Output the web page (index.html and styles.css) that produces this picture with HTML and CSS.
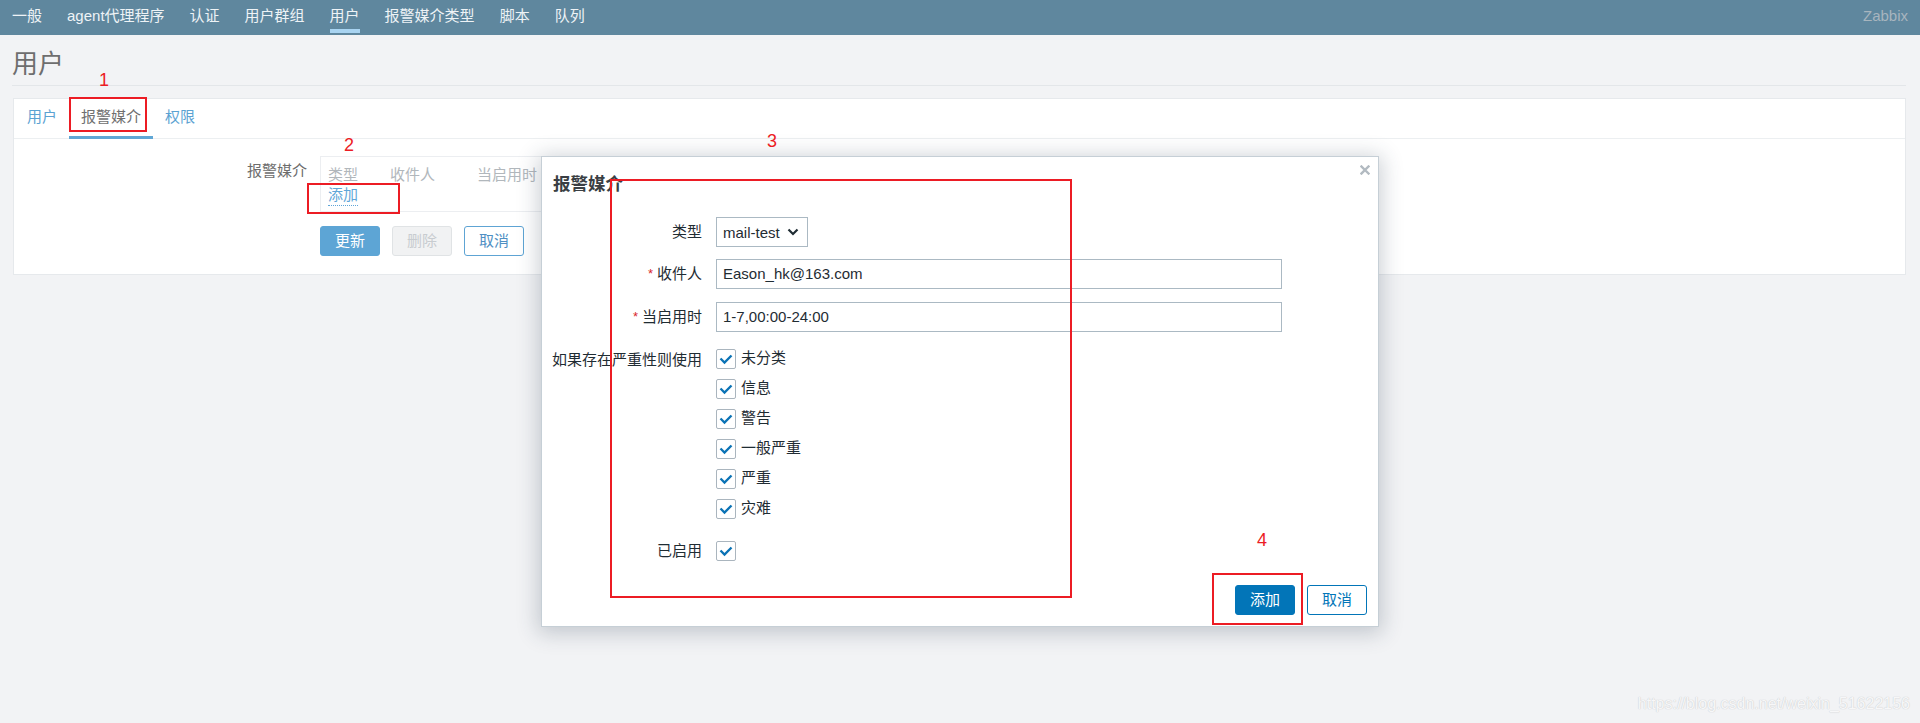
FILE: index.html
```html
<!DOCTYPE html>
<html lang="zh-CN">
<head>
<meta charset="utf-8">
<title>用户</title>
<link rel="stylesheet" href="styles.css">
</head>
<body>
<header class="topnav">
  <nav class="topnav-menu">
    <a class="topnav-item">一般</a>
    <a class="topnav-item">agent代理程序</a>
    <a class="topnav-item">认证</a>
    <a class="topnav-item">用户群组</a>
    <a class="topnav-item is-active">用户</a>
    <a class="topnav-item">报警媒介类型</a>
    <a class="topnav-item">脚本</a>
    <a class="topnav-item">队列</a>
  </nav>
  <span class="topnav-brand">Zabbix</span>
</header>

<main class="page">
  <h1 class="page-title">用户</h1>
  <section class="card">
    <ul class="tabs">
      <li class="tab">用户</li>
      <li class="tab is-active">报警媒介</li>
      <li class="tab">权限</li>
    </ul>
    <div class="card-body">
      <div class="form-row">
        <div class="form-label">报警媒介</div>
        <div class="media-table">
          <div class="media-head">
            <span class="col-type">类型</span>
            <span class="col-to">收件人</span>
            <span class="col-when">当启用时</span>
          </div>
          <div class="media-add"><a class="link-dotted">添加</a></div>
        </div>
      </div>
      <div class="form-actions">
        <button class="btn btn-primary-faded">更新</button>
        <button class="btn btn-disabled">删除</button>
        <button class="btn btn-alt-faded">取消</button>
      </div>
    </div>
  </section>
</main>

<div class="dialog">
  <div class="dialog-head">
    <h2 class="dialog-title">报警媒介</h2>
    <button class="dialog-close" aria-label="关闭">
      <svg width="10" height="10" viewBox="0 0 10 10"><path d="M1.5 1.5 L8.5 8.5 M8.5 1.5 L1.5 8.5" stroke="#b2bac1" stroke-width="2.4" stroke-linecap="square"/></svg>
    </button>
  </div>
  <div class="dialog-form">
    <div class="dlabel">类型</div>
    <div class="dfield">
      <div class="select">
        <span>mail-test</span>
        <svg width="12" height="8" viewBox="0 0 12 8"><path d="M1.5 1.5 L6 6 L10.5 1.5" fill="none" stroke="#1f2c33" stroke-width="2.2"/></svg>
      </div>
    </div>

    <div class="dlabel"><span class="req">*</span>收件人</div>
    <div class="dfield"><div class="input">Eason_hk@163.com</div></div>

    <div class="dlabel"><span class="req">*</span>当启用时</div>
    <div class="dfield"><div class="input">1-7,00:00-24:00</div></div>

    <div class="dlabel">如果存在严重性则使用</div>
    <div class="dfield">
      <ul class="checklist">
        <li class="check-item"><span class="checkbox"><svg width="20" height="20" viewBox="0 0 20 20"><path d="M4.5 9.5 L8.5 13.5 L15.5 6.5" fill="none" stroke="#0a72b5" stroke-width="2.3"/></svg></span><span class="check-label">未分类</span></li>
        <li class="check-item"><span class="checkbox"><svg width="20" height="20" viewBox="0 0 20 20"><path d="M4.5 9.5 L8.5 13.5 L15.5 6.5" fill="none" stroke="#0a72b5" stroke-width="2.3"/></svg></span><span class="check-label">信息</span></li>
        <li class="check-item"><span class="checkbox"><svg width="20" height="20" viewBox="0 0 20 20"><path d="M4.5 9.5 L8.5 13.5 L15.5 6.5" fill="none" stroke="#0a72b5" stroke-width="2.3"/></svg></span><span class="check-label">警告</span></li>
        <li class="check-item"><span class="checkbox"><svg width="20" height="20" viewBox="0 0 20 20"><path d="M4.5 9.5 L8.5 13.5 L15.5 6.5" fill="none" stroke="#0a72b5" stroke-width="2.3"/></svg></span><span class="check-label">一般严重</span></li>
        <li class="check-item"><span class="checkbox"><svg width="20" height="20" viewBox="0 0 20 20"><path d="M4.5 9.5 L8.5 13.5 L15.5 6.5" fill="none" stroke="#0a72b5" stroke-width="2.3"/></svg></span><span class="check-label">严重</span></li>
        <li class="check-item"><span class="checkbox"><svg width="20" height="20" viewBox="0 0 20 20"><path d="M4.5 9.5 L8.5 13.5 L15.5 6.5" fill="none" stroke="#0a72b5" stroke-width="2.3"/></svg></span><span class="check-label">灾难</span></li>
      </ul>
    </div>

    <div class="dlabel">已启用</div>
    <div class="dfield">
      <div class="check-item"><span class="checkbox"><svg width="20" height="20" viewBox="0 0 20 20"><path d="M4.5 9.5 L8.5 13.5 L15.5 6.5" fill="none" stroke="#0a72b5" stroke-width="2.3"/></svg></span></div>
    </div>
  </div>
  <div class="dialog-foot">
    <button class="btn btn-primary">添加</button>
    <button class="btn btn-alt">取消</button>
  </div>
</div>

<div class="anno-box anno-box-1"></div>
<div class="anno-num anno-num-1">1</div>
<div class="anno-box anno-box-2"></div>
<div class="anno-num anno-num-2">2</div>
<div class="anno-box anno-box-3"></div>
<div class="anno-num anno-num-3">3</div>
<div class="anno-box anno-box-4"></div>
<div class="anno-num anno-num-4">4</div>

<div class="watermark">https://blog.csdn.net/weixin_51622156</div>
</body>
</html>
```

FILE: styles.css
```css
* { box-sizing: border-box; }

html, body {
  margin: 0;
  padding: 0;
}

body {
  width: 1920px;
  height: 723px;
  overflow: hidden;
  background: #f2f3f5;
  font-family: "Liberation Sans", "Noto Sans CJK SC", sans-serif;
  font-size: 15px;
  color: #1f2c33;
  position: relative;
}

ul { list-style: none; margin: 0; padding: 0; }
button { font-family: inherit; }

/* top navigation */
.topnav {
  height: 35px;
  background: #5f879e;
  display: flex;
  align-items: flex-start;
  justify-content: space-between;
  padding: 0 12px 0 12px;
}

.topnav-menu {
  display: flex;
  gap: 25px;
}

.topnav-item {
  display: block;
  height: 35px;
  line-height: 31px;
  color: #eef3f6;
  font-size: 15px;
  border-bottom: 4px solid transparent;
}

.topnav-item.is-active {
  border-bottom: 4px solid #a9d4f1;
  height: 33px;
}

.topnav-brand {
  line-height: 31px;
  color: #a8b5be;
  font-size: 15px;
}

/* page */
.page {
  padding: 0 14px 0 13px;
}

.page-title {
  margin: 11px 0 0 -1px;
  font-size: 26px;
  font-weight: normal;
  line-height: 36px;
  color: #6e6e6e;
  padding-bottom: 3px;
  border-bottom: 1px solid #e3e6e9;
}

.card {
  margin-top: 12px;
  background: #fff;
  border: 1px solid #e6e9ec;
  height: 177px;
}

.tabs {
  display: flex;
  padding-left: 1px;
  border-bottom: 1px solid #eceff1;
  height: 40px;
}

.tab {
  padding: 0 12px;
  line-height: 36px;
  height: 40px;
  border-bottom: 3px solid transparent;
  color: #5ba2d2;
  font-size: 15px;
}

.tab.is-active {
  color: #707070;
  border-bottom-color: #60a7d5;
}

.card-body {
  padding-top: 17px;
}

.form-row {
  display: grid;
  grid-template-columns: 293px auto;
  column-gap: 13px;
  align-items: start;
}

.form-label {
  text-align: right;
  color: #6d6d6d;
  line-height: 20px;
  padding-top: 5px;
}

.media-table {
  width: 640px;
  height: 56px;
  border: 1px solid #eceef1;
  padding: 9px 0 0 7px;
}

.media-head {
  display: flex;
  line-height: 18px;
  height: 18px;
  color: #b1b7bc;
}

.col-type { width: 62px; }
.col-to { width: 87px; }
.col-when { width: 90px; }

.media-add {
  height: 22px;
  padding-top: 1px;
}

.link-dotted {
  display: inline-block;
  line-height: 20px;
  padding-bottom: 0;
  color: #5fa6d8;
  border-bottom: 1px dotted #5fa6d8;
}

.form-actions {
  display: flex;
  gap: 12px;
  margin: 14px 0 0 306px;
}

.btn {
  width: 60px;
  height: 30px;
  border-radius: 3px;
  font-size: 15px;
  line-height: 26px;
  padding: 0;
  border: 1px solid transparent;
  cursor: pointer;
}

.btn-primary-faded {
  background: #5da5d5;
  border-color: #5da5d5;
  color: #fff;
}

.btn-disabled {
  background: #f1f2f3;
  border-color: #e0e3e5;
  color: #c8ccd0;
}

.btn-alt-faded {
  background: #fff;
  border-color: #5ea4d4;
  color: #4f8fc3;
}

.btn-primary {
  background: #0275b8;
  border-color: #0275b8;
  color: #fff;
}

.btn-alt {
  background: #fff;
  border-color: #0275b8;
  color: #0275b8;
}

/* dialog (overlay) */
.dialog {
  position: absolute;
  left: 541px;
  top: 156px;
  width: 838px;
  height: 471px;
  background: #fff;
  border: 1px solid #c6cfd6;
  box-shadow: 0 3px 20px 3px rgba(40, 60, 80, 0.24);
}

.dialog-head {
  padding: 15px 12px 0 11px;
}

.dialog-title {
  margin: 0;
  font-size: 17.5px;
  line-height: 24px;
  font-weight: bold;
  color: #3a3f44;
}

.dialog-close {
  position: absolute;
  top: 8px;
  right: 8px;
  width: 10px;
  height: 10px;
  border: 0;
  padding: 0;
  background: none;
}

.dialog-close svg { display: block; }

.dialog-form {
  margin-top: 21px;
  padding-left: 10px;
  display: grid;
  grid-template-columns: max-content auto;
  column-gap: 14px;
  row-gap: 12px;
  align-items: start;
}

.dlabel {
  text-align: right;
  line-height: 30px;
  color: #1f2c33;
  white-space: nowrap;
}

.req {
  color: #d8262b;
  font-size: 13px;
  margin-right: 4px;
  position: relative;
  top: -1px;
}

.select {
  width: 92px;
  height: 30px;
  border: 1px solid #abb9c3;
  display: flex;
  align-items: center;
  justify-content: space-between;
  padding: 0 8px 0 6px;
  color: #1f2c33;
}

.select svg { display: block; }

.input {
  width: 566px;
  height: 30px;
  border: 1px solid #abb9c3;
  line-height: 28px;
  padding-left: 6px;
  color: #1f2c33;
}

.checklist {
  margin-top: -1px;
}

.check-item {
  display: flex;
  align-items: center;
  height: 30px;
  line-height: 20px;
  color: #1f2c33;
}

.check-label {
  display: block;
  line-height: 20px;
  margin-top: -2px;
}

.checkbox {
  width: 20px;
  height: 20px;
  border: 1px solid #aab5be;
  border-radius: 2px;
  margin-right: 5px;
  position: relative;
  display: block;
}

.checkbox svg {
  position: absolute;
  left: -1px;
  top: -1px;
}

.dialog-foot {
  position: absolute;
  right: 11px;
  bottom: 11px;
  display: flex;
  gap: 12px;
}

/* red annotations drawn over the screenshot */
.anno-box {
  position: absolute;
  border: 2px solid #ec1c24;
}

.anno-box-1 { left: 69px; top: 97px; width: 78px; height: 35px; }
.anno-box-2 { left: 307px; top: 183px; width: 93px; height: 31px; }
.anno-box-3 { left: 610px; top: 179px; width: 462px; height: 419px; }
.anno-box-4 { left: 1212px; top: 573px; width: 91px; height: 52px; }

.anno-num {
  position: absolute;
  width: 20px;
  height: 20px;
  line-height: 20px;
  text-align: center;
  font-family: "Liberation Sans", sans-serif;
  font-size: 18px;
  color: #ec1c24;
}

.anno-num-1 { left: 94px; top: 70px; }
.anno-num-2 { left: 339px; top: 135px; }
.anno-num-3 { left: 762px; top: 131px; }
.anno-num-4 { left: 1252px; top: 530px; }

.watermark {
  position: absolute;
  right: 10px;
  top: 694px;
  font-family: "Liberation Sans", sans-serif;
  font-size: 16px;
  line-height: 20px;
  color: #f7f7f8;
  text-shadow: 0 0 1px #c9cbcd, 0 0 1px #d4d6d8;
}
```
